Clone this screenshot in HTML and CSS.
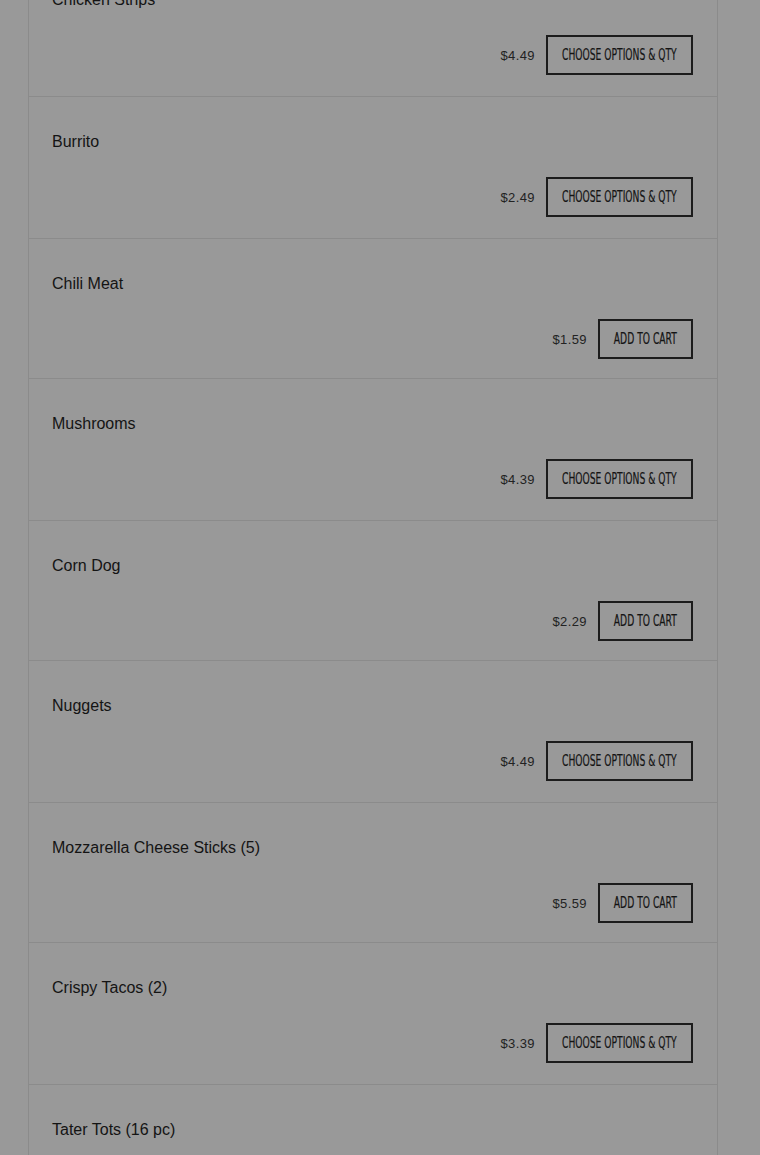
FILE: index.html
```html
<!DOCTYPE html>
<html>
<head>
<meta charset="utf-8">
<link rel="stylesheet" href="styles.css">
</head>
<body>
<div class="menu">
  <div class="item item--opts">
    <div class="item-name">Chicken Strips</div>
    <div class="item-foot"><span class="price">$4.49</span><button class="btn btn--wide"><span class="btn-label">Choose Options &amp; Qty</span></button></div>
  </div>
  <div class="item item--opts">
    <div class="item-name">Burrito</div>
    <div class="item-foot"><span class="price">$2.49</span><button class="btn btn--wide"><span class="btn-label">Choose Options &amp; Qty</span></button></div>
  </div>
  <div class="item">
    <div class="item-name">Chili Meat</div>
    <div class="item-foot"><span class="price">$1.59</span><button class="btn"><span class="btn-label">Add to Cart</span></button></div>
  </div>
  <div class="item item--opts">
    <div class="item-name">Mushrooms</div>
    <div class="item-foot"><span class="price">$4.39</span><button class="btn btn--wide"><span class="btn-label">Choose Options &amp; Qty</span></button></div>
  </div>
  <div class="item">
    <div class="item-name">Corn Dog</div>
    <div class="item-foot"><span class="price">$2.29</span><button class="btn"><span class="btn-label">Add to Cart</span></button></div>
  </div>
  <div class="item item--opts">
    <div class="item-name">Nuggets</div>
    <div class="item-foot"><span class="price">$4.49</span><button class="btn btn--wide"><span class="btn-label">Choose Options &amp; Qty</span></button></div>
  </div>
  <div class="item">
    <div class="item-name">Mozzarella Cheese Sticks (5)</div>
    <div class="item-foot"><span class="price">$5.59</span><button class="btn"><span class="btn-label">Add to Cart</span></button></div>
  </div>
  <div class="item item--opts">
    <div class="item-name">Crispy Tacos (2)</div>
    <div class="item-foot"><span class="price">$3.39</span><button class="btn btn--wide"><span class="btn-label">Choose Options &amp; Qty</span></button></div>
  </div>
  <div class="item item--opts">
    <div class="item-name">Tater Tots (16 pc)</div>
    <div class="item-foot"><span class="price">$2.99</span><button class="btn btn--wide"><span class="btn-label">Choose Options &amp; Qty</span></button></div>
  </div>
</div>
</body>
</html>
```
FILE: styles.css
```css
html, body {
  margin: 0;
  padding: 0;
  background: #999999;
  height: 100%;
  overflow: hidden;
}
body {
  font-family: "Liberation Sans", Arial, sans-serif;
  color: #111;
}
.menu {
  margin: -45px 0 0 28px;
  width: 690px;
  box-sizing: border-box;
  border-left: 1px solid #8b8b8b;
  border-right: 1px solid #8b8b8b;
}
.item {
  padding: 36px 24px 19px 23px;
  border-bottom: 1px solid #8b8b8b;
}
.item--opts {
  padding-bottom: 21px;
}
.item-name {
  font-size: 16px;
  line-height: 18px;
  color: #141414;
}
.item-foot {
  margin-top: 26px;
  display: flex;
  justify-content: flex-end;
  align-items: center;
  gap: 11px;
}
.price {
  font-size: 13px;
  letter-spacing: 0.4px;
  color: #222;
}
.btn {
  width: 95px;
  height: 40px;
  box-sizing: border-box;
  border: 2px solid #1c1c1c;
  background: transparent;
  padding: 0;
  margin: 0;
  display: flex;
  align-items: center;
  justify-content: center;
  white-space: nowrap;
  overflow: visible;
  font-family: "DejaVu Sans Condensed", "DejaVu Sans", sans-serif;
  font-stretch: condensed;
  font-size: 15px;
  text-transform: uppercase;
  color: #141414;
  -webkit-text-stroke: 0.2px #141414;
  cursor: pointer;
}
.btn--wide {
  width: 147px;
}
.btn-label {
  display: inline-block;
  transform: scaleX(0.68);
  transform-origin: center;
}
```
